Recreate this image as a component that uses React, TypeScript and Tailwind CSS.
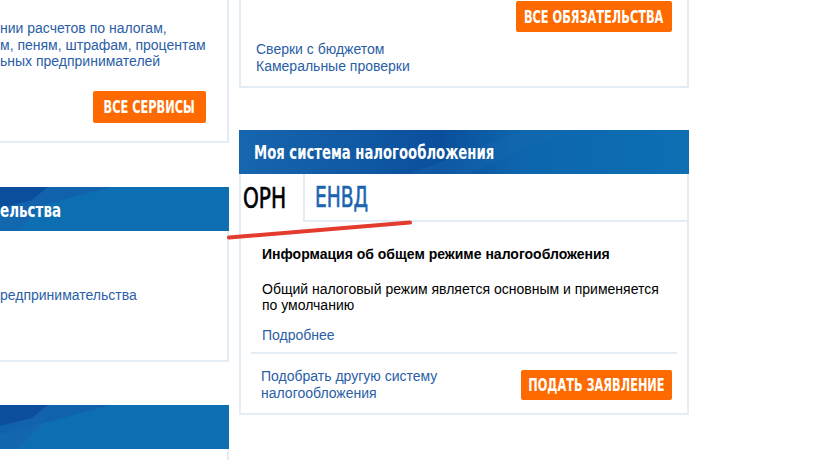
import React from "react";

const cond = "font-['DejaVu_Sans_Condensed','DejaVu_Sans',sans-serif] [font-stretch:condensed]";
const sans = "font-['Liberation_Sans',Arial,sans-serif]";

function HeaderBg({ variant }: { variant: "left" | "right" }) {
  if (variant === "right") {
    return (
      <svg className="absolute inset-0 h-full w-full" viewBox="0 0 450 44" preserveAspectRatio="none">
        <defs>
          <linearGradient id="hr" x1="0" y1="0" x2="1" y2="0">
            <stop offset="0" stopColor="#1766ae" />
            <stop offset="0.45" stopColor="#0b4f9b" />
            <stop offset="0.62" stopColor="#0d66ad" />
            <stop offset="1" stopColor="#0e6fb3" />
          </linearGradient>
        </defs>
        <rect width="450" height="44" fill="url(#hr)" />
        <polygon points="170,44 285,0 330,0 230,44" fill="#1a6bb1" opacity="0.35" />
      </svg>
    );
  }
  return (
    <svg className="absolute inset-0 h-full w-full" viewBox="0 0 229 44" preserveAspectRatio="none">
      <rect width="229" height="44" fill="#0d6eb1" />
      <polygon points="0,0 110,0 0,30" fill="#125fab" opacity="0.8" />
      <polygon points="0,0 48,0 32,13 0,21" fill="#0b4f9c" />
      <polygon points="0,44 0,30 32,13 48,0 60,0 18,44" fill="#1563ad" opacity="0.6" />
    </svg>
  );
}

function OrangeButton({ w, h, text }: { w: string; h: string; text: string }) {
  return (
    <div className={`${w} ${h} flex shrink-0 items-center justify-center rounded-[2px] bg-[#ff6a00] text-white`}>
      <span className={`${cond} inline-block scale-x-[0.7] whitespace-nowrap text-[18px] font-bold leading-none`}>
        {text}
      </span>
    </div>
  );
}

export default function App() {
  return (
    <div className={`${sans} relative flex h-[460px] w-[814px] gap-[10px] overflow-hidden bg-white`}>
      {/* left column */}
      <div className="flex w-[229px] shrink-0 flex-col">
        <div className="h-[143px] shrink-0 border-b-[2px] border-r-[2px] border-[#e4edf6] pt-[20px]">
          <div className="whitespace-nowrap text-[14px] leading-[16.5px] text-[#2a5ea6]">
            <div>нии расчетов по налогам,</div>
            <div>м, пеням, штрафам, процентам</div>
            <div>ьных предпринимателей</div>
          </div>
          <div className="mt-[21px] flex justify-end pr-[21px]">
            <OrangeButton w="w-[113px]" h="h-[32px]" text="ВСЕ СЕРВИСЫ" />
          </div>
        </div>
        <div className="mt-[44px] flex shrink-0 flex-col">
          <div className="relative h-[44px] shrink-0">
            <HeaderBg variant="left" />
            <div className={`${cond} relative pt-[13px] text-[20px] font-bold leading-[20px] text-white`}>
              <span className="inline-block origin-left scale-x-[0.75]">ельства</span>
            </div>
          </div>
          <div className="h-[131px] shrink-0 border-b-[2px] border-r-[2px] border-[#e4edf6] pt-[56px]">
            <div className="whitespace-nowrap text-[14px] leading-[17px] text-[#2a5ea6]">редпринимательства</div>
          </div>
        </div>
        <div className="mt-[43px] flex shrink-0 flex-col">
          <div className="relative h-[44px] shrink-0">
            <HeaderBg variant="left" />
          </div>
          <div className="h-[40px] shrink-0 border-r-[2px] border-[#e4edf6]" />
        </div>
      </div>

      {/* right column */}
      <div className="flex w-[450px] shrink-0 flex-col">
        <div className="h-[88px] shrink-0 border-x-[2px] border-b-[2px] border-[#e4edf6]">
          <div className="flex justify-end pr-[15px] pt-[1px]">
            <OrangeButton w="w-[156px]" h="h-[31px]" text="ВСЕ ОБЯЗАТЕЛЬСТВА" />
          </div>
          <div className="ml-[15px] mt-[9px] text-[14px] leading-[17px] text-[#2a5ea6]">
            <div>Сверки с бюджетом</div>
            <div>Камеральные проверки</div>
          </div>
        </div>

        <div className="mt-[42px] flex shrink-0 flex-col">
          <div className="relative h-[44px] shrink-0">
            <HeaderBg variant="right" />
            <div className={`${cond} relative pl-[15px] pt-[12px] text-[20px] font-bold leading-[20px] text-white`}>
              <span className="inline-block origin-left scale-x-[0.735] whitespace-nowrap">Моя система налогообложения</span>
            </div>
          </div>
          <div className="flex h-[48px] shrink-0 border-x-[2px] border-[#e4edf6]">
            <div className="flex w-[62px] items-center pl-[2px] pt-[2px]">
              <span className={`${cond} inline-block origin-left scale-x-[0.8] text-[28px] leading-none text-black [-webkit-text-stroke:0.6px_#000]`}>ОРН</span>
            </div>
            <div className="flex flex-1 items-center border-b-[2px] border-l-[2px] border-[#e4edf6] pl-[10px] pt-[2px]">
              <span className={`${cond} inline-block origin-left scale-x-[0.74] text-[28px] leading-none text-[#1a64b0] [-webkit-text-stroke:0.6px_#1a64b0]`}>ЕНВД</span>
            </div>
          </div>
          <div className="flex h-[193px] shrink-0 flex-col border-x-[2px] border-b-[2px] border-[#e4edf6] px-[10px]">
            <div className="pl-[11px] pt-[24px]">
              <div className="text-[14px] font-bold leading-[17px] text-black">Информация об общем режиме налогообложения</div>
              <div className="mt-[18px] text-[14px] leading-[16px] text-black">
                Общий налоговый режим является основным и применяется
                <br />
                по умолчанию
              </div>
              <div className="mt-[14px] text-[14px] leading-[17px] text-[#2a5ea6]">Подробнее</div>
            </div>
            <div className="mt-[8px] h-[2px] bg-[#e4edf6]" />
            <div className="flex items-center justify-between pl-[10px] pr-[5px] pt-[14px]">
              <div className="text-[14px] leading-[17px] text-[#2a5ea6]">
                Подобрать другую систему
                <br />
                налогообложения
              </div>
              <OrangeButton w="w-[151px]" h="h-[30px]" text="ПОДАТЬ ЗАЯВЛЕНИЕ" />
            </div>
          </div>
        </div>
      </div>

      {/* red annotation stroke */}
      <svg className="pointer-events-none absolute left-0 top-0" width="814" height="460">
        <line x1="229" y1="237.5" x2="410" y2="222.5" stroke="#e33b2e" strokeWidth="4" strokeLinecap="round" />
      </svg>
    </div>
  );
}
